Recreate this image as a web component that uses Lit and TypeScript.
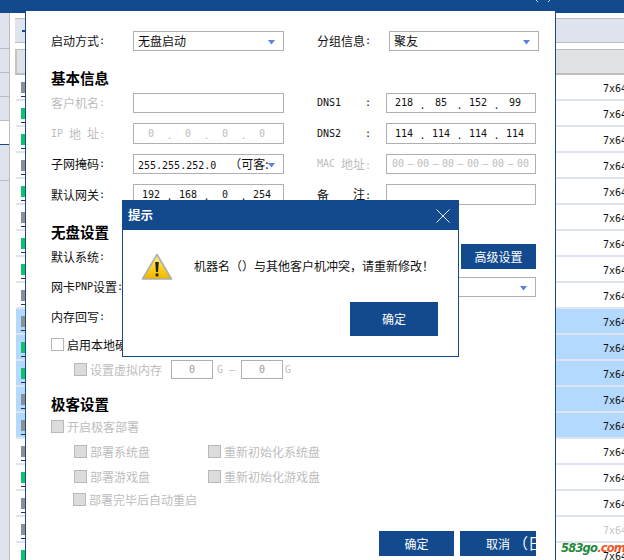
import { LitElement, html, css } from "lit";
import { customElement } from "lit/decorators.js";

const m = (s: string) => html`<span class="m">${s}</span>`;
const rows = "gGGgGgGGggGGgggGggG".split("");

const arrow = html`<svg class="arrow" width="7" height="5" viewBox="0 0 7 5"><path d="M0 0H7L3.5 4.5Z" fill="#5a80e0"/></svg>`;
const ip = (a: string[], dis = false) => html`<div class="field ip ${dis ? "dis" : ""}">
  ${a.map((v, i) => html`<span class="seg">${v}</span>${i < 3 ? html`<span class="dot">.</span>` : ""}`)}
</div>`;
const chk = (label: string, cls = "") => html`<div class="chk dis ${cls}"><i class="box"></i><span>${label}</span></div>`;

@customElement("app-root")
export class AppRoot extends LitElement {
  static styles = css`
    :host { display: block; width: 624px; height: 560px; position: relative; overflow: hidden; background: #fff;
      font: 12px/1 "Noto Sans CJK SC", sans-serif; color: #111; }
    .m { font: 10px/1 "DejaVu Sans Mono", monospace; }

    /* background application */
    .bg { display: flex; flex-direction: column; height: 560px; }
    .topbar { height: 13px; background: #134a8e; flex: none; }
    .main { display: flex; flex: 1; min-height: 0; }
    .side { width: 9px; flex: none; background: #dfe3ee; border-right: 1px solid #bdbdbd; display: flex; flex-direction: column; }
    .side i { display: block; height: 24px; box-sizing: border-box; border-bottom: 1px solid #bdbdbd; flex: none; }
    .side i.first { height: 36px; }
    .side i.sel { background: #fff; border-bottom: 1px solid #134a8e; }
    .side i.last { height: 36px; }
    .content { flex: 1; min-width: 0; margin-left: 5px; padding-top: 5px; overflow: hidden; }
    .tabs { height: 25px; background: #dfe3ee; border-top: 1px solid #bdbdbd; border-bottom: 1px solid #bdbdbd; box-sizing: border-box; display: flex; align-items: center; padding-left: 7px; }
    .tabs b { width: 4px; height: 2px; background: #134a8e; }
    .head { margin-top: 6px; height: 26px; box-sizing: border-box; background: #e0e2e6; border-top: 1px solid #bdbdbd; border-bottom: 2px solid #bdbdbd; border-left: 2px solid #c4c4c4; }
    .row { height: 26px; box-sizing: border-box; border-bottom: 2px solid #e0e3f0; margin-left: 1px; padding-left: 5px; display: grid; grid-template-columns: 4px 578px auto; background: #fff; overflow: hidden; }
    .row.sel { background: #b3d9ff; }
    .ic { margin-top: 7px; height: 15px; display: flex; flex-direction: column; justify-content: space-between; }
    .ic u { display: block; height: 11px; background: #8f8f8f; }
    .ic.G u { background: #0cc46c; }
    .ic s { display: block; height: 1px; background: #333; }
    .row .t { grid-column: 3; padding-top: 9px; font: 10px/1 "DejaVu Sans Mono", monospace; white-space: nowrap; color: #111; }
    .row.fade .t { color: #c4c4c4; }

    /* main dialog */
    .dlg { position: absolute; left: 25px; top: 0; width: 531px; height: 560px; box-sizing: border-box; background: #fff; border-left: 1px solid #134a8e; border-right: 1px solid #134a8e; display: flex; flex-direction: column; overflow: hidden; }
    .dlg-title { height: 11px; flex: none; background: #134a8e; position: relative; }
    .dlg-title svg { position: absolute; left: 508px; top: 0; }
    .form { padding: 20px 0 0 25px; display: flex; flex-direction: column; flex: 1; }
    .r1 { display: grid; grid-template-columns: 82px 151px 33px 72px 150px; height: 20px; align-items: center; }
    h2 { margin: 0; font-size: 14.5px; line-height: 18px; font-weight: 700; color: #000; }
    .h1 { margin-top: 18px; }
    .grid { margin-top: 6px; display: grid; grid-template-columns: 82px 151px 33px 69px 150px; grid-template-rows: 20px 21px 20px 21px; row-gap: 10px; align-items: stretch; }
    .lab { display: flex; align-items: center; white-space: nowrap; }
    .lab.dis, .dis { color: #bdbdbd; }
    .lab.sp { gap: 6px; }
    .lab.wide { width: 54px; justify-content: space-between; }
    .field { box-sizing: border-box; border: 1px solid #b0b0b0; background: #fff; display: flex; align-items: center; position: relative; padding-left: 4px; overflow: hidden; }
    .combo { height: 20px; }
    .combo .arrow { position: absolute; right: 8px; top: 8px; }
    .ip { padding-left: 2px; }
    .seg { width: 30px; text-align: center; font: 10px/1 "DejaVu Sans Mono", monospace; flex: none; }
    .dot { width: 7px; text-align: center; font: 10px/1 "DejaVu Sans Mono", monospace; flex: none; padding-top: 5px; }
    .mask { width: 130px; overflow: hidden; white-space: nowrap; display: block; }
    .mask .m { margin-right: 13px; }
    .mac { padding-left: 5px; }
    .mac .seg { width: 12px; }
    .mac .dash { width: 13px; text-align: center; flex: none; font: 10px/1 "DejaVu Sans Mono", monospace; }
    .h2 { margin-top: 18px; }
    .sys { display: flex; height: 25px; margin-top: 3px; align-items: center; justify-content: space-between; padding-right: 19px; }
    .btn { background: #134a8e; color: #fff; display: flex; align-items: center; justify-content: center; box-sizing: border-box; flex: none; position: relative; overflow: hidden; }
    .b75 { width: 75px; height: 25px; }
    .pnp { display: grid; grid-template-columns: 82px 403px; height: 20px; margin-top: 8px; align-items: center; }
    .pnp .lab { overflow: visible; }
    .wb { margin-top: 13px; height: 14px; display: flex; align-items: center; }
    .chk { display: flex; align-items: center; gap: 3px; height: 13px; white-space: nowrap; }
    .box { display: block; width: 13px; height: 13px; box-sizing: border-box; border: 1px solid #b8b8b8; background: #dcdcdc; flex: none; }
    .chk.on { color: #111; }
    .chk.on .box { background: #fff; }
    .c1 { margin-top: 14px; }
    .vm { margin: 9px 0 0 23px; height: 19px; display: flex; align-items: center; color: #bdbdbd; }
    .vml { margin-left: 3px; }
    .vm .field { width: 42px; height: 19px; padding: 0; justify-content: center; color: #999; font: 10px/1 "DejaVu Sans Mono", monospace; }
    .vm .v1 { margin-left: 9px; }
    .vm .g1 { margin: 0 6px 0 4px; }
    .vm .g2 { margin-right: 6px; }
    .vm .g3 { margin-left: 2px; }
    .h3 { margin-top: 16px; }
    .c2 { margin-top: 7px; }
    .subs { margin: 12px 0 0 23px; display: grid; grid-template-columns: 134px auto; row-gap: 12px; justify-content: start; }
    .c3 { margin: 10px 0 0 22px; }
    .foot { position: absolute; right: 19px; bottom: 4px; display: flex; gap: 6px; }
    .b76 { width: 76px; }
    .ghost { position: absolute; left: 53px; top: 3px; font-size: 15px; line-height: 18px; white-space: nowrap; color: #fff; }

    /* alert */
    .alert { position: absolute; left: 122px; top: 200px; width: 337px; height: 157px; box-sizing: border-box; border: 1px solid #134a8e; background: #fff; display: flex; flex-direction: column; }
    .a-title { height: 29px; background: #134a8e; flex: none; display: flex; align-items: center; justify-content: space-between; padding: 0 8px 0 5px; color: #fff; font-size: 12.5px; font-weight: 700; }
    .a-body { display: flex; align-items: center; padding: 23px 0 0 18px; }
    .a-msg { margin-left: 21px; white-space: nowrap; color: #111; margin-top: -3px; }
    .a-foot { display: flex; justify-content: flex-end; padding-right: 20px; margin-top: 21px; }
    .b88 { width: 88px; height: 34px; }

    .wm { position: absolute; left: 561px; top: 541px; font: italic 700 11.5px/14px "DejaVu Sans", sans-serif; letter-spacing: -0.8px; color: #1f8a3c; white-space: nowrap; }
    .wm span { color: #ea5a2e; }
  `;

  render() {
    return html`
      <div class="bg">
        <div class="topbar"></div>
        <div class="main">
          <div class="side">
            <i class="first"></i><i></i><i></i><i></i><i class="sel"></i><i class="last"></i>
          </div>
          <div class="content">
            <div class="tabs"><b></b></div>
            <div class="head"></div>
            ${rows.map((r, i) => html`
              <div class="row ${i >= 9 && i <= 13 ? "sel" : ""} ${i === 17 ? "fade" : ""}">
                <div class="ic ${r}"><u></u><s></s></div>
                <span class="t">7x64</span>
              </div>`)}
          </div>
        </div>
      </div>

      <div class="dlg">
        <div class="dlg-title">
          <svg width="20" height="3" viewBox="0 0 20 3"><path d="M2 0L4 2M14 2L16 0" stroke="#cfd9e8" fill="none"/></svg>
        </div>
        <div class="form">
          <div class="r1">
            <div class="lab">启动方式${m(":")}</div>
            <div class="field combo">无盘启动${arrow}</div>
            <div></div>
            <div class="lab">分组信息${m(":")}</div>
            <div class="field combo">聚友${arrow}</div>
          </div>
          <h2 class="h1">基本信息</h2>
          <div class="grid">
            <div class="lab dis">客户机名${m(":")}</div>
            <div class="field"></div>
            <div></div>
            <div class="lab wide">${m("DNS1")}${m(":")}</div>
            ${ip(["218", "85", "152", "99"])}

            <div class="lab dis sp">${m("IP")}<span>地</span><span>址${m(":")}</span></div>
            ${ip(["0", "0", "0", "0"], true)}
            <div></div>
            <div class="lab wide">${m("DNS2")}${m(":")}</div>
            ${ip(["114", "114", "114", "114"])}

            <div class="lab">子网掩码${m(":")}</div>
            <div class="field combo"><span class="mask">${m("255.255.252.0")}（可客:</span>${arrow}</div>
            <div></div>
            <div class="lab dis sp">${m("MAC")}<span>地址${m(":")}</span></div>
            <div class="field mac dis">
              ${["00", "00", "00", "00", "00", "00"].map((v, i) => html`<span class="seg">${v}</span>${i < 5 ? html`<span class="dash">–</span>` : ""}`)}
            </div>

            <div class="lab">默认网关${m(":")}</div>
            ${ip(["192", "168", "0", "254"])}
            <div></div>
            <div class="lab wide"><span>备</span><span>注${m(":")}</span></div>
            <div class="field"></div>
          </div>

          <h2 class="h2">无盘设置</h2>
          <div class="sys">
            <div class="lab">默认系统${m(":")}</div>
            <div class="btn b75">高级设置</div>
          </div>
          <div class="pnp">
            <div class="lab">网卡${m("PNP")}设置${m(":")}</div>
            <div class="field combo">${arrow}</div>
          </div>
          <div class="wb"><div class="lab">内存回写${m(":")}</div></div>
          <div class="chk on c1"><i class="box"></i><span>启用本地硬盘</span></div>
          <div class="vm">
            <i class="box"></i><span class="vml">设置虚拟内存</span>
            <div class="field v1">0</div><span class="m g1">G</span><span class="m g2">–</span>
            <div class="field">0</div><span class="m g3">G</span>
          </div>

          <h2 class="h3">极客设置</h2>
          ${chk("开启极客部署", "c2")}
          <div class="subs">
            ${chk("部署系统盘")}${chk("重新初始化系统盘")}
            ${chk("部署游戏盘")}${chk("重新初始化游戏盘")}
          </div>
          ${chk("部署完毕后自动重启", "c3")}
          <div class="foot">
            <div class="btn b75">确定</div>
            <div class="btn b76 b75">取消<span class="ghost">（日</span></div>
          </div>
        </div>
      </div>

      <div class="alert">
        <div class="a-title">
          <span>提示</span>
          <svg width="14" height="14" viewBox="0 0 14 14"><path d="M0.5 0.5L13.5 13.5M13.5 0.5L0.5 13.5" stroke="#e6ecf5" stroke-width="1" fill="none"/></svg>
        </div>
        <div class="a-body">
          <svg width="32" height="28" viewBox="0 0 32 28">
            <defs><linearGradient id="y" x1="0" y1="0" x2="0" y2="1"><stop offset="0" stop-color="#fff3a0"/><stop offset=".55" stop-color="#fbd21c"/><stop offset="1" stop-color="#f0b400"/></linearGradient></defs>
            <path d="M16 1.5L30.5 26H1.5Z" fill="url(#y)" stroke="#aeaeae" stroke-width="1.6" stroke-linejoin="round"/>
            <path d="M14.2 9H17.8L17 19H15Z" fill="#222"/>
            <rect x="14.6" y="20.5" width="2.8" height="2.8" fill="#222"/>
          </svg>
          <span class="a-msg">机器名（）与其他客户机冲突，请重新修改！</span>
        </div>
        <div class="a-foot"><div class="btn b88">确定</div></div>
      </div>

      <div class="wm">583go<span>.com</span></div>
    `;
  }
}
